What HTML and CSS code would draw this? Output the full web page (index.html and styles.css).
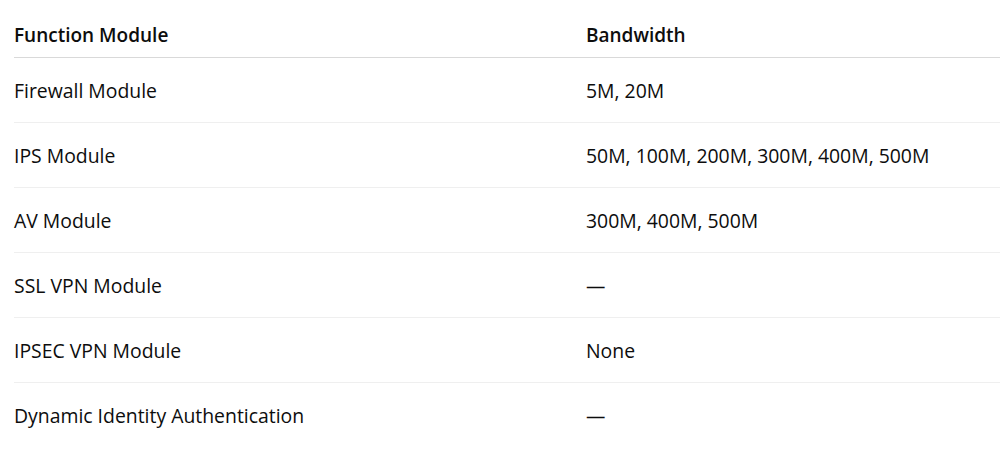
FILE: index.html
```html
<!DOCTYPE html>
<html lang="en">
<head>
<meta charset="utf-8">
<title>Modules</title>
<link rel="stylesheet" href="styles.css">
</head>
<body>
<div class="table">
  <div class="row head">
    <div class="cell c1">Function Module</div>
    <div class="cell c2">Bandwidth</div>
  </div>
  <div class="row">
    <div class="cell c1">Firewall Module</div>
    <div class="cell c2">5M, 20M</div>
  </div>
  <div class="row">
    <div class="cell c1">IPS Module</div>
    <div class="cell c2">50M, 100M, 200M, 300M, 400M, 500M</div>
  </div>
  <div class="row">
    <div class="cell c1">AV Module</div>
    <div class="cell c2">300M, 400M, 500M</div>
  </div>
  <div class="row">
    <div class="cell c1">SSL VPN Module</div>
    <div class="cell c2">—</div>
  </div>
  <div class="row">
    <div class="cell c1">IPSEC VPN Module</div>
    <div class="cell c2">None</div>
  </div>
  <div class="row last">
    <div class="cell c1">Dynamic Identity Authentication</div>
    <div class="cell c2">—</div>
  </div>
</div>
</body>
</html>
```
FILE: styles.css
```css
html, body {
  margin: 0;
  padding: 0;
  background: #ffffff;
}
body {
  font-family: "Open Sans", "Noto Sans", sans-serif;
  font-size: 19.4px;
  color: #0d0d0d;
}
.table {
  margin-left: 14px;
  margin-right: 1px;
}
.row {
  display: grid;
  grid-template-columns: 572px 1fr;
  padding: 21px 0 19px;
  line-height: 24px;
  border-bottom: 1px solid #efefef;
}
.row.head {
  padding: 23px 0 10px;
  font-size: 19px;
  font-weight: 600;
  border-bottom-color: #d9d9d9;
}
.row.last {
  border-bottom: none;
}
```
